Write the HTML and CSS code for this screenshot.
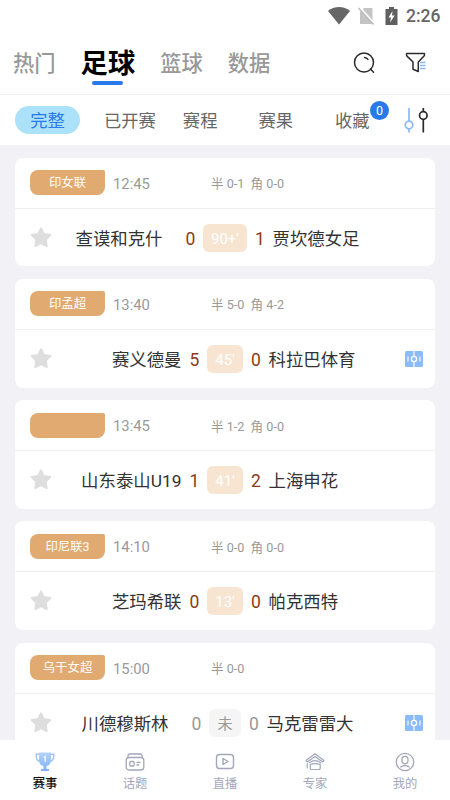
FILE: index.html
```html
<!DOCTYPE html>
<html lang="zh-CN">
<head>
<meta charset="utf-8">
<title>足球赛事</title>
<link rel="stylesheet" href="styles.css">
</head>
<body>
<svg width="0" height="0" class="defs">
  <symbol id="star" viewBox="0 0 22 21"><path d="M11 1.400 13.800 7l6.500 1-4.600 4.600 1 6.500-5.700-2.900-5.700 2.900 1-6.500L1.700 8l6.500-1z" fill="#dedede" stroke="#dedede" stroke-width="2" stroke-linejoin="round"/></symbol>
  <symbol id="pitch" viewBox="0 0 18 16"><rect width="18" height="16" rx="1.500" fill="#8cbbfa"/><path d="M9 0v5M9 11v5M3 5.500v5M15 5.500v5" stroke="#fff" stroke-width="1.100"/><circle cx="9" cy="8" r="2.600" fill="none" stroke="#fff" stroke-width="1.300"/></symbol>
</svg>
<div class="app">
  <div class="status">
    <svg class="wifi" width="22" height="18" viewBox="0 0 22 18"><path d="M0 4C6-1.200 16-1.200 22 4L11 17.600z" fill="#666"/></svg>
    <svg class="sim" width="17" height="18" viewBox="0 0 17 18"><path d="M6 1h8.500v16H2V5z" fill="#c4c4c4"/><path d="M1.500 0 16.500 17" stroke="#fff" stroke-width="2"/><path d="M.5 1 15.500 17.500" stroke="#bcbcbc" stroke-width="1.500"/></svg>
    <svg class="battery" width="13" height="18" viewBox="0 0 13 18"><path d="M4 0h5v2h3.500v16H.5V2H4z" fill="#5f5f5f"/><path d="M7.500 4 3.500 10.500H6L5 15.500 9.700 8.600H7z" fill="#fff"/></svg>
    <span class="clock">2:26</span>
  </div>
  <header class="sports">
    <span class="sport">热门</span>
    <span class="sport on">足球</span>
    <span class="sport">篮球</span>
    <span class="sport">数据</span>
    <svg class="search" width="22" height="22" viewBox="0 0 22 22" fill="none" stroke="#2b2b2b" stroke-width="1.500" stroke-linecap="round"><circle cx="11" cy="10.500" r="9.500"/><path d="m17.500 17 3 3.200M11.500 5.400q2.300.1 3.400 2"/></svg>
    <svg class="filter" width="22" height="22" viewBox="0 0 22 22" fill="none"><path d="M1.600 1.500h17.800q.5 1.800-.4 2.600L13.300 10v9.500L8 17.300V10L2 4.100Q1.100 3.300 1.600 1.500z" stroke="#2b2b2b" stroke-width="1.500" stroke-linejoin="round"/><path d="M15 10.500h5.500M15 13.500h5.500M15 16.500h5.500" stroke="#8db9fb" stroke-width="1.300"/></svg>
  </header>
  <nav class="tabs">
    <span class="tab on">完整</span>
    <span class="tab t2">已开赛</span>
    <span class="tab t3">赛程</span>
    <span class="tab t4">赛果</span>
    <span class="tab t5">收藏<b class="badge">0</b></span>
    <svg class="tune" width="26" height="26" viewBox="0 0 26 26" fill="none" stroke-width="1.700"><g stroke="#8db9fb"><path d="M5 1v13M5 22v3.500"/><circle cx="5" cy="18" r="3.800"/></g><g stroke="#2b2b2b"><path d="M19.300 1v4M19.300 12v13.500"/><circle cx="19.300" cy="8.500" r="3.800"/></g></svg>
  </nav>
  <main class="list">
    <article class="card">
      <div class="meta"><span class="league">印女联</span><span class="time">12:45</span><span class="half">半 0-1&nbsp; 角 0-0</span></div>
      <div class="match"><svg class="star"><use href="#star"/></svg><div class="side home far"><span class="team">查谟和克什</span><span class="score">0</span></div><span class="chip wide">90+'</span><div class="side"><span class="score">1</span><span class="team">贾坎德女足</span></div></div>
    </article>
    <article class="card">
      <div class="meta"><span class="league">印孟超</span><span class="time">13:40</span><span class="half">半 5-0&nbsp; 角 4-2</span></div>
      <div class="match"><svg class="star"><use href="#star"/></svg><div class="side home"><span class="team">赛义德曼</span><span class="score">5</span></div><span class="chip">45'</span><div class="side"><span class="score">0</span><span class="team">科拉巴体育</span></div><svg class="pitch"><use href="#pitch"/></svg></div>
    </article>
    <article class="card">
      <div class="meta"><span class="league"></span><span class="time">13:45</span><span class="half">半 1-2&nbsp; 角 0-0</span></div>
      <div class="match"><svg class="star"><use href="#star"/></svg><div class="side home"><span class="team">山东泰山U19</span><span class="score">1</span></div><span class="chip">41'</span><div class="side"><span class="score">2</span><span class="team">上海申花</span></div></div>
    </article>
    <article class="card">
      <div class="meta"><span class="league">印尼联3</span><span class="time">14:10</span><span class="half">半 0-0&nbsp; 角 0-0</span></div>
      <div class="match"><svg class="star"><use href="#star"/></svg><div class="side home"><span class="team">芝玛希联</span><span class="score">0</span></div><span class="chip">13'</span><div class="side"><span class="score">0</span><span class="team">帕克西特</span></div></div>
    </article>
    <article class="card pending">
      <div class="meta"><span class="league">乌干女超</span><span class="time">15:00</span><span class="half">半 0-0</span></div>
      <div class="match"><svg class="star"><use href="#star"/></svg><div class="side home far"><span class="team">川德穆斯林</span><span class="score">0</span></div><span class="chip">未</span><div class="side"><span class="score">0</span><span class="team">马克雷雷大</span></div><svg class="pitch"><use href="#pitch"/></svg></div>
    </article>
  </main>
  <footer class="bottom">
    <div class="item on"><svg viewBox="0 0 20 20"><defs><linearGradient id="cup" x2="0" y2="1"><stop stop-color="#b5d2fc"/><stop offset="1" stop-color="#7db0f8"/></linearGradient></defs><path d="M4 .5h12v7q0 5.500-4.500 6.500v3H14V19H6v-2h2.500v-3Q4 13 4 7.500z" fill="url(#cup)"/><path d="M4 2.200H1.200Q.8 8.500 5 9.500M16 2.200h2.800q.4 6.300-3.800 7.300" fill="none" stroke="#9dc3fb" stroke-width="1.400"/><path d="m8.700 5.500 1.500-1V10" fill="none" stroke="#fff" stroke-width="1.200"/></svg><span>赛事</span></div>
    <div class="item"><svg viewBox="0 0 20 20" fill="none" stroke="#a2a7ba" stroke-width="1.300"><rect x="1.200" y="5.500" width="17.600" height="12.500" rx="3"/><path d="M3 5.500V3.500Q3 2 4.500 2h11Q17 2 17 3.500v2M11.500 10.300h4M11.500 13h2.500"/><rect x="4.800" y="9.500" width="4.300" height="4.500" rx="1"/></svg><span>话题</span></div>
    <div class="item"><svg viewBox="0 0 20 20" fill="none" stroke="#a2a7ba" stroke-width="1.400"><rect x="1.500" y="2.500" width="17" height="14" rx="3"/><path d="M8 6.500v6l5-3z" stroke-linejoin="round"/></svg><span>直播</span></div>
    <div class="item"><svg viewBox="0 0 20 20" fill="none" stroke="#a2a7ba" stroke-width="1.200" stroke-linejoin="round" stroke-linecap="round"><path d="M10 1.800 1 8.600l1.200 1.300L10 4.400l7.800 5.500L19 8.600z"/><path d="M2.200 11.500v4.500M5.300 12v4.200q0 1.300 1.300 1.300h7.300q1.300 0 1.300-1.300V12M4.500 10.500q5.500-3.800 11 0M5.300 12.500q4.900-1.800 9.900 0"/></svg><span>专家</span></div>
    <div class="item"><svg viewBox="0 0 20 20" fill="none" stroke="#a2a7ba" stroke-width="1.300"><circle cx="10" cy="10" r="8.700"/><rect x="7" y="4.300" width="6" height="7.500" rx="3"/><path d="M5.700 15q4.300-3 8.600 0" stroke-linecap="round"/></svg><span>我的</span></div>
  </footer>
</div>
</body>
</html>
```
FILE: styles.css
```css
* { box-sizing: border-box; }
body { margin: 0; background: #fff; font-family: Roboto, "Noto Sans CJK SC", sans-serif; }
svg { display: block; flex: none; }
.defs { position: absolute; }
.app { width: 450px; height: 800px; display: flex; flex-direction: column; overflow: hidden; }

.status { height: 31px; flex: none; display: flex; align-items: center; justify-content: flex-end; padding-right: 9px; color: #666; }
.wifi { margin-right: 8px; }
.sim { margin-right: 10px; }
.battery { margin-right: 8px; }
.clock { font-size: 17.500px; line-height: 18px; font-weight: 500; width: 35px; white-space: nowrap; }

.sports { height: 64px; flex: none; display: flex; align-items: center; padding: 0 23px 0 13px; border-bottom: 1px solid #efefef; white-space: nowrap; }
.sport { font-size: 21.300px; line-height: 28px; padding-top: 2px; font-weight: 500; color: #999; margin-right: 25px; }
.sport.on { font-size: 27.300px; line-height: 42px; color: #000; font-weight: 700; position: relative; }
.sport.on::after { content: ""; position: absolute; left: 11px; bottom: 0; width: 31px; height: 4px; border-radius: 2px; background: #2979ea; }
.search { margin-left: auto; margin-right: 30px; }

.tabs { height: 50px; flex: none; display: flex; align-items: center; padding-left: 15px; color: #666; font-size: 17.300px; white-space: nowrap; }
.tab { height: 28px; line-height: 30px; }
.tab.on { width: 65px; border-radius: 14px; background: #abe1f9; color: #2979ea; text-align: center; }
.t2 { margin-left: 24px; }
.t3 { margin-left: 27px; }
.t4 { margin-left: 41px; }
.t5 { margin-left: 42px; position: relative; }
.badge { position: absolute; left: 35px; top: -5px; width: 19px; height: 19px; border-radius: 50%; background: #2979ea; color: #fff; font-size: 12.500px; line-height: 20px; font-weight: 400; text-align: center; }
.tune { margin-left: 34px; }

.list { flex: 1; min-height: 0; overflow: hidden; background: #f1f1f6; padding: 12.500px 15px 0; display: flex; flex-direction: column; gap: 12.500px; }
.card { height: 108.750px; flex: none; background: #fff; border-radius: 8px; }
.meta { height: 51px; border-bottom: 1px solid #efeff2; display: flex; align-items: center; padding-left: 15px; color: #999; }
.league { width: 75px; height: 25px; line-height: 26px; border-radius: 8px 2px 8px 8px; background: #e1aa70; color: #fff; font-size: 12.400px; text-align: center; }
.time { width: 106px; padding-left: 8px; font-size: 14.800px; padding-top: 2px; }
.half { font-size: 12.600px; }
.match { position: relative; height: 57px; display: grid; grid-template-columns: 1fr auto 1fr; align-items: center; column-gap: 8px; padding-top: 1px; }
.star { position: absolute; left: 15px; top: 18px; width: 22px; height: 21px; }
.pitch { position: absolute; right: 12.500px; top: 21px; width: 18px; height: 16px; }
.side { display: flex; align-items: center; gap: 8px; padding-top: 2px; white-space: nowrap; }
.home { justify-content: flex-end; }
.home.far { gap: 23px; }
.team { font-size: 17.400px; line-height: 26px; color: #333; }
.score { font-size: 17.500px; line-height: 26px; color: #8b3c16; width: 9.500px; }
.chip { width: 36px; height: 28px; border-radius: 6px; background: #f7e5d1; color: #fff; font-size: 15px; line-height: 30px; text-align: center; }
.chip.wide { width: 44px; }
.pending .score { color: #999; }
.pending .chip { width: 32px; background: #f5f5f5; color: #999; }

.bottom { height: 60px; flex: none; background: #fff; display: flex; }
.item { flex: 1; display: flex; flex-direction: column; align-items: center; padding-top: 11.500px; color: #a2a7ba; font-size: 12.300px; line-height: 18px; }
.item svg { width: 20px; height: 20px; margin-bottom: 3px; }
.item.on { color: #111; font-weight: 500; }
```
